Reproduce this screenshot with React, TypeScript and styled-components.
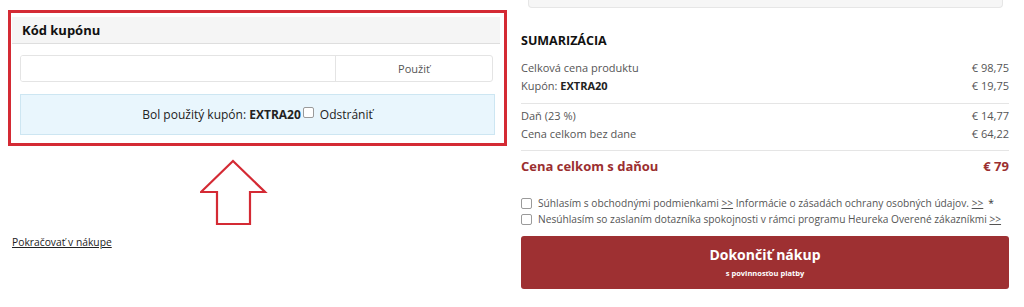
import React from "react";
import styled, { createGlobalStyle } from "styled-components";

const GlobalStyle = createGlobalStyle`
  html, body {
    margin: 0;
    padding: 0;
    background: #fff;
  }
  body {
    font-family: "Open Sans", "Noto Sans", Arial, sans-serif;
    color: #222;
  }
`;

const accentRed = "#d42a34";
const wine = "#9e3032";

const Page = styled.div`
  display: grid;
  grid-template-columns: 499px 488px;
  column-gap: 14px;
  padding: 0 15px 0 8px;
  width: 1024px;
  height: 307px;
  box-sizing: border-box;
  overflow: hidden;
`;

const LeftCol = styled.div`
  display: flex;
  flex-direction: column;
  padding-top: 10px;
`;

const Highlight = styled.div`
  border: 3px solid ${accentRed};
  padding: 4px 4px 8px 1px;
`;

const CardHeader = styled.div`
  height: 26px;
  background: #f5f5f5;
  border-bottom: 1px solid #dedede;
  display: flex;
  align-items: center;
  padding-left: 10px;
  font-size: 13px;
  font-weight: 700;
  color: #111;
`;

const CardBody = styled.div`
  padding: 11px 0 0 8px;
  display: flex;
  flex-direction: column;
  gap: 12px;
`;

const InputGroup = styled.div`
  display: flex;
  height: 27px;
  width: 473px;
  border: 1px solid #e4e4e4;
  border-radius: 3px;
  box-sizing: border-box;
  overflow: hidden;
`;

const CodeInput = styled.div`
  flex: 1;
  background: #fff;
`;

const ApplyButton = styled.div`
  width: 156px;
  border-left: 1px solid #e4e4e4;
  display: flex;
  align-items: center;
  justify-content: center;
  font-size: 11px;
  color: #555;
`;

const Alert = styled.div`
  height: 41px;
  width: 475px;
  box-sizing: border-box;
  background: #e9f6fd;
  border: 1px solid #cde6f2;
  display: flex;
  align-items: center;
  justify-content: center;
  font-size: 12px;
  color: #222;
`;

const Box = styled.span<{ $size: number }>`
  display: inline-block;
  width: ${(p) => p.$size}px;
  height: ${(p) => p.$size}px;
  border: 1px solid #9a9a9a;
  border-radius: 2px;
  background: #fff;
  box-sizing: border-box;
  flex-shrink: 0;
`;

const AlertBox = styled(Box)`
  margin: -4px 6px 0 2px;
`;

const ArrowWrap = styled.div`
  margin: 13px 0 0 192px;
  height: 68px;
`;

const ContinueLink = styled.a`
  margin: 7px 0 0 4px;
  font-size: 10.3px;
  color: #222;
  text-decoration: underline;
  line-height: 16px;
`;

const RightCol = styled.div`
  display: flex;
  flex-direction: column;
`;

const StubBox = styled.div`
  height: 7px;
  margin: 0 6px 0 7px;
  background: #f6f6f6;
  border: 1px solid #e6e6e6;
  border-top: none;
  border-radius: 0 0 4px 4px;
`;

const Title = styled.div`
  margin-top: 24px;
  font-size: 12.5px;
  line-height: 18px;
  font-weight: 700;
  color: #111;
`;

const Rows = styled.div<{ $top: number }>`
  margin-top: ${(p) => p.$top}px;
  display: flex;
  flex-direction: column;
`;

const Row = styled.div`
  display: flex;
  justify-content: space-between;
  font-size: 11px;
  line-height: 18px;
  color: #555;

  b {
    color: #222;
  }
`;

const Divider = styled.div<{ $top: number }>`
  margin-top: ${(p) => p.$top}px;
  height: 1px;
  background: #e5e5e5;
`;

const TotalRow = styled.div`
  margin-top: 5px;
  display: flex;
  justify-content: space-between;
  font-size: 13px;
  line-height: 20px;
  font-weight: 700;
  color: #9b2f30;
`;

const Consents = styled.div`
  margin-top: 19px;
  display: flex;
  flex-direction: column;
`;

const Consent = styled.label`
  display: flex;
  align-items: center;
  gap: 6px;
  font-size: 10.2px;
  line-height: 16px;
  color: #555;
  white-space: nowrap;

  a {
    color: #555;
    text-decoration: underline;
  }
`;

const Star = styled.span`
  margin-left: 5px;
  color: #333;
`;

const SubmitButton = styled.button`
  margin-top: 9px;
  height: 53px;
  border: none;
  border-radius: 3px;
  background: ${wine};
  color: #fff;
  font-family: inherit;
  display: flex;
  flex-direction: column;
  align-items: center;
  justify-content: center;
  gap: 3px;
  padding: 0 0 3px;
`;

const SubmitMain = styled.span`
  font-size: 14px;
  font-weight: 700;
  line-height: 20px;
`;

const SubmitSub = styled.span`
  font-size: 7.5px;
  font-weight: 700;
  line-height: 10px;
`;

const UpArrow = () => (
  <svg width="68" height="68" viewBox="0 0 68 68">
    <path
      d="M33 2 L65 33 L50 33 L50 65 L17 65 L17 33 L1 33 Z"
      fill="none"
      stroke={accentRed}
      strokeWidth="2.2"
      strokeLinejoin="miter"
    />
  </svg>
);

export default function App() {
  return (
    <>
      <GlobalStyle />
      <Page>
        <LeftCol>
          <Highlight>
            <CardHeader>Kód kupónu</CardHeader>
            <CardBody>
              <InputGroup>
                <CodeInput />
                <ApplyButton>Použiť</ApplyButton>
              </InputGroup>
              <Alert>
                Bol použitý kupón:&nbsp;<b>EXTRA20</b>
                <AlertBox $size={11} />
                Odstrániť
              </Alert>
            </CardBody>
          </Highlight>
          <ArrowWrap>
            <UpArrow />
          </ArrowWrap>
          <ContinueLink>Pokračovať v nákupe</ContinueLink>
        </LeftCol>

        <RightCol>
          <StubBox />
          <Title>SUMARIZÁCIA</Title>
          <Rows $top={9}>
            <Row>
              <span>Celková cena produktu</span>
              <span>€ 98,75</span>
            </Row>
            <Row>
              <span>
                Kupón: <b>EXTRA20</b>
              </span>
              <span>€ 19,75</span>
            </Row>
          </Rows>
          <Divider $top={8} />
          <Rows $top={3}>
            <Row>
              <span>Daň (23 %)</span>
              <span>€ 14,77</span>
            </Row>
            <Row>
              <span>Cena celkom bez dane</span>
              <span>€ 64,22</span>
            </Row>
          </Rows>
          <Divider $top={7} />
          <TotalRow>
            <span>Cena celkom s daňou</span>
            <span>€ 79</span>
          </TotalRow>
          <Consents>
            <Consent>
              <Box $size={11} />
              <span>
                Súhlasím s obchodnými podmienkami <a>&gt;&gt;</a> Informácie o
                zásadách ochrany osobných údajov. <a>&gt;&gt;</a>
                <Star>*</Star>
              </span>
            </Consent>
            <Consent>
              <Box $size={11} />
              <span>
                Nesúhlasím so zaslaním dotazníka spokojnosti v rámci programu
                Heureka Overené zákazníkmi <a>&gt;&gt;</a>
              </span>
            </Consent>
          </Consents>
          <SubmitButton>
            <SubmitMain>Dokončiť nákup</SubmitMain>
            <SubmitSub>s povinnosťou platby</SubmitSub>
          </SubmitButton>
        </RightCol>
      </Page>
    </>
  );
}
